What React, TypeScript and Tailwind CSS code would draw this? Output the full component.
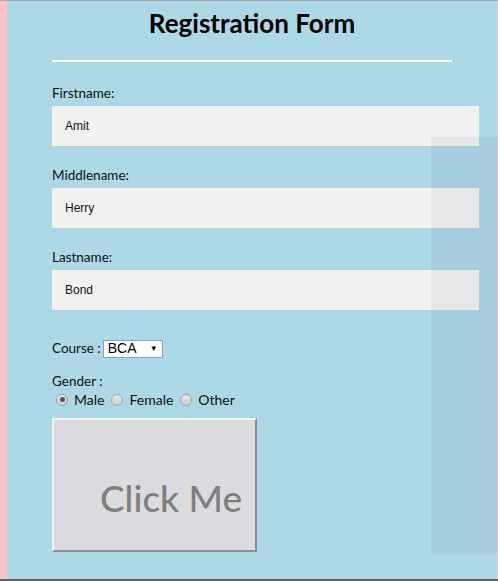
import * as React from "react"

const sans = { fontFamily: "Lato, 'Open Sans', sans-serif" }

function Field({ label, value, first }: { label: string; value: string; first?: boolean }) {
  return (
    <div className={first ? "mt-[23px]" : "mt-[21px]"}>
      <div className="text-[13.5px] leading-[17px] text-[#111]">{label}</div>
      <div className="mt-[4px] h-[40px] w-[427px] bg-[#f1f1f1] flex items-center pl-[13px] text-[12px] text-[#111] font-['Liberation_Sans',Arial,sans-serif]">
        {value}
      </div>
    </div>
  )
}

function Radio({ checked, label }: { checked?: boolean; label: string }) {
  return (
    <div className="flex items-center mr-[7px]">
      <span className="w-[12px] h-[12px] rounded-full border border-[#a3a3a3] bg-gradient-to-b from-[#e6e6e6] to-[#cfcfcf] flex items-center justify-center">
        {checked && <span className="w-[5px] h-[5px] rounded-full bg-[#555]" />}
      </span>
      <span className="ml-[6px] text-[14px] leading-[17px] text-[#111]">{label}</span>
    </div>
  )
}

export default function App() {
  return (
    <div className="relative w-[498px] h-[581px] flex flex-col overflow-hidden" style={sans}>
      <div className="h-[1px] bg-[#a5acb3]" />
      <div className="flex flex-1 min-h-0">
        <div className="w-[7px] bg-[#ffc0cb]" />
        <div className="flex-1 bg-[#add8e6] flex flex-col">
          <h1 className="text-center text-[26px] font-bold leading-[30px] mt-[7px] text-black">Registration Form</h1>
          <div className="ml-[45px] w-[400px] h-[2px] bg-white mt-[22px]" />
          <div className="pl-[45px] flex flex-col">
            <Field label="Firstname:" value="Amit" first />
            <Field label="Middlename:" value="Herry" />
            <Field label="Lastname:" value="Bond" />
            <div className="mt-[29px] flex items-center h-[19px]">
              <span className="text-[13.5px] text-[#111] mr-[2px]">Course :</span>
              <div className="w-[60px] h-[18px] border border-[#7ea5d6] bg-white flex items-center justify-between pl-[4px] pr-[4px] text-[14px] text-black font-['Liberation_Sans',Arial,sans-serif]">
                <span>BCA</span>
                <span className="text-[8px]">▼</span>
              </div>
            </div>
            <div className="mt-[15px] text-[13.5px] leading-[17px] text-[#111]">Gender :</div>
            <div className="flex items-center ml-[4px] mt-[1px]">
              <Radio checked label="Male" />
              <Radio label="Female" />
              <Radio label="Other" />
            </div>
            <button className="mt-[10px] w-[205px] h-[134px] bg-[#dcdbdf] border-2 border-t-[#f2f2f2] border-l-[#f2f2f2] border-b-[#8e8e8e] border-r-[#8e8e8e] flex items-end justify-end pr-[13px] pb-[30px] text-[37px] leading-[44px] text-[#7f807e] font-medium" style={sans}>
              Click Me
            </button>
          </div>
        </div>
        <div className="w-[1px] bg-[#ffc0cb]" />
      </div>
      <div className="h-[2px] bg-[#5b6166]" />
      <div className="absolute left-[431px] top-[137px] w-[66px] h-[418px] bg-[rgba(0,20,40,0.045)]" />
    </div>
  )
}
